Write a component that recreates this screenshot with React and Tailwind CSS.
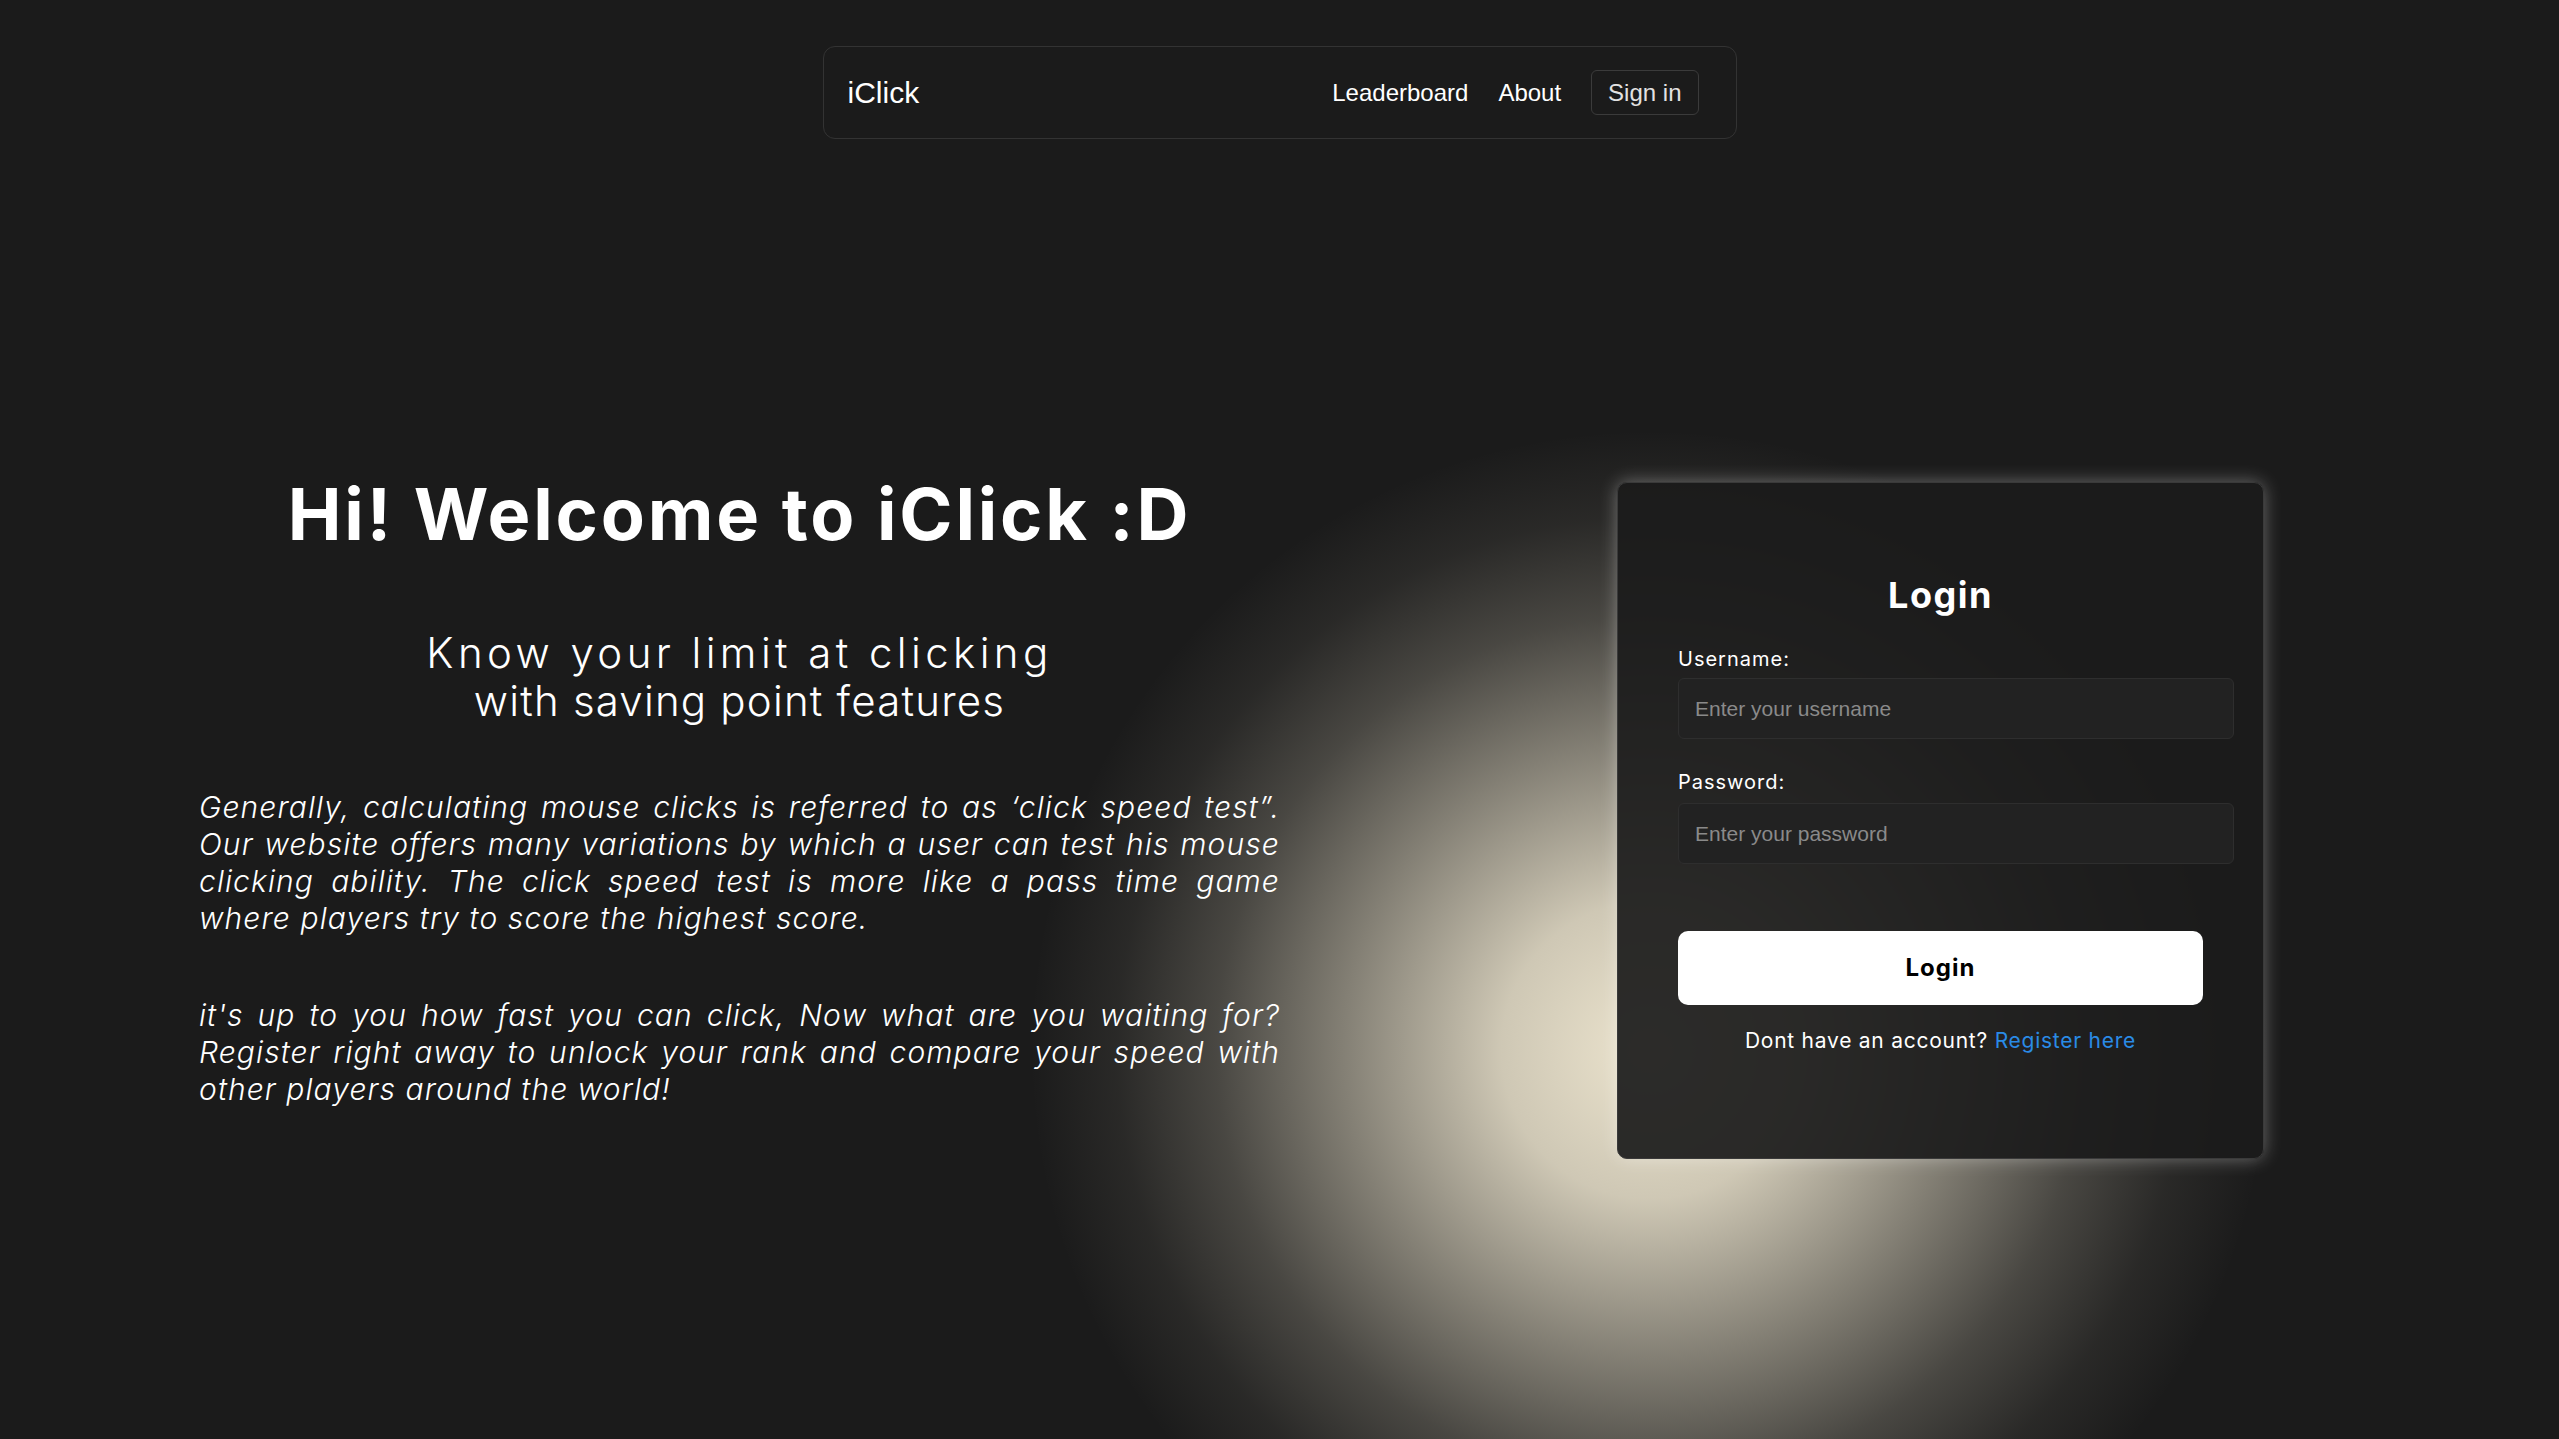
import React from "react";

const introLines = [
  "Generally, calculating mouse clicks is referred to as \u2018click speed test\u201d.",
  "Our website offers many variations by which a user can test his mouse",
  "clicking ability. The click speed test is more like a pass time game",
];

const outroLines = [
  "it's up to you how fast you can click, Now what are you waiting for?",
  "Register right away to unlock your rank and compare your speed with",
];

const Navbar = () => (
  <nav className="mx-auto mt-[46px] flex h-[93px] w-[914px] items-center justify-between rounded-xl border border-[#333333] pl-[24px] pr-[37px] font-['Liberation_Sans',Arial,sans-serif] text-white">
    <a className="text-[30px] leading-none">iClick</a>
    <div className="flex items-center gap-[30px] text-[24px] leading-none">
      <a>Leaderboard</a>
      <a>About</a>
      <button className="h-[45px] rounded-md border border-[#3b3b3b] px-[16px] text-[#e2e2e2]">
        Sign in
      </button>
    </div>
  </nav>
);

const LoginCard = () => (
  <div className="mt-[4px] flex h-[677px] w-[647px] flex-col items-center rounded-[10px] border border-[#3a3a3a] bg-[#1b1b1b]/92 pt-[90px] shadow-[0_0_18px_rgba(255,255,255,0.35)]">
    <h2 className="text-[36px] font-bold leading-[44px] tracking-[1.5px] text-white">Login</h2>
    <form className="mt-[30px] flex w-[525px] flex-col" onSubmit={(e) => e.preventDefault()}>
      <label className="text-[20px] leading-[24px] tracking-[1px] text-white">Username:</label>
      <input
        type="text"
        placeholder="Enter your username"
        className="mt-[7px] h-[61px] w-[556px] rounded-md border border-[#2e2e2e] bg-[#222222] px-[16px] font-['Liberation_Sans',Arial,sans-serif] text-[21px] text-white placeholder:text-[#8a8a8a] outline-none"
      />
      <label className="mt-[31px] text-[20px] leading-[24px] tracking-[1px] text-white">Password:</label>
      <input
        type="password"
        placeholder="Enter your password"
        className="mt-[9px] h-[61px] w-[556px] rounded-md border border-[#2e2e2e] bg-[#222222] px-[16px] font-['Liberation_Sans',Arial,sans-serif] text-[21px] text-white placeholder:text-[#8a8a8a] outline-none"
      />
      <button
        type="submit"
        className="mt-[67px] h-[74px] w-full rounded-[10px] bg-white text-[24px] font-bold tracking-[1px] text-black"
      >
        Login
      </button>
      <p className="mt-[23px] text-center text-[21px] leading-[26px] tracking-[0.75px] text-white">
        Dont have an account? <a className="text-[#2a8be6]">Register here</a>
      </p>
    </form>
  </div>
);

export default function App() {
  return (
    <div className="relative min-h-screen overflow-hidden bg-[#1b1b1b] font-['Inter',sans-serif]">
      {/* soft cream glow behind the login card */}
      <div className="pointer-events-none absolute left-[1030px] top-[430px] h-[1240px] w-[1240px] bg-[radial-gradient(closest-side,rgba(236,228,206,1)_0%,rgba(236,228,206,0.86)_24%,rgba(236,228,206,0.52)_48%,rgba(236,228,206,0.22)_70%,rgba(236,228,206,0.07)_86%,rgba(236,228,206,0)_100%)]" />

      <div className="relative z-10">
        <Navbar />

        <main className="flex items-start pl-[199px] pt-[339px]">
          <section className="flex w-[1081px] flex-col items-center text-white">
            <h1 className="text-[72px] font-bold leading-none tracking-[2.8px]">
              Hi! Welcome to iClick :D
            </h1>
            <div className="mt-[79px] text-center text-[42px] font-light leading-[48px]">
              <p className="tracking-[4.4px]">Know your limit at clicking</p>
              <p className="tracking-[1.2px]">with saving point features</p>
            </div>
            <div className="mt-[64px] w-full text-[30px] font-light italic leading-[37px] tracking-[1.1px]">
              {introLines.map((line) => (
                <span key={line} className="block text-justify [text-align-last:justify]">
                  {line}
                </span>
              ))}
              <span className="block">where players try to score the highest score.</span>
            </div>
            <div className="mt-[60px] w-full text-[30px] font-light italic leading-[37px] tracking-[1.1px]">
              {outroLines.map((line) => (
                <span key={line} className="block text-justify [text-align-last:justify]">
                  {line}
                </span>
              ))}
              <span className="block">other players around the world!</span>
            </div>
          </section>

          <div className="ml-[337px]">
            <LoginCard />
          </div>
        </main>
      </div>
    </div>
  );
}
